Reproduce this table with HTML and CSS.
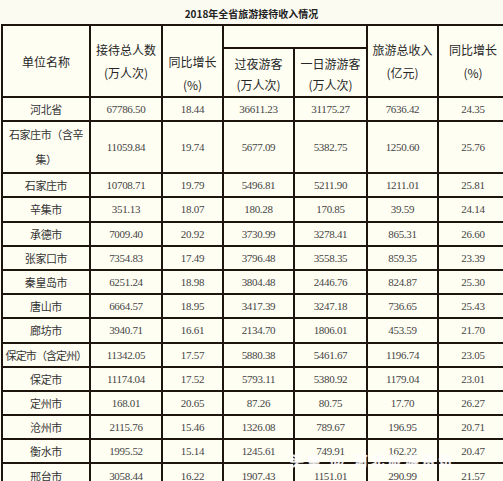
FILE: index.html
```html
<!DOCTYPE html>
<html lang="zh">
<head>
<meta charset="utf-8">
<link rel="stylesheet" href="styles.css">
</head>
<body>
<div class="page">
  <div class="title">2018年全省旅游接待收入情况</div>
  <table class="data">
    <colgroup>
      <col class="c1"><col class="c2"><col class="c3"><col class="c4"><col class="c5"><col class="c6"><col class="c7">
    </colgroup>
    <thead>
      <tr class="h-top">
        <th rowspan="2">单位名称</th>
        <th rowspan="2">接待总人数<br>(万人次)</th>
        <th rowspan="2"><br>同比增长<br>(%)</th>
        <th colspan="2" class="blank"></th>
        <th rowspan="2">旅游总收入<br>(亿元)</th>
        <th rowspan="2">同比增长<br>(%)</th>
      </tr>
      <tr class="h-sub">
        <th>过夜游客<br>(万人次)</th>
        <th>一日游游客<br>(万人次)</th>
      </tr>
    </thead>
    <tbody>
      <tr><td class="name">河北省</td><td>67786.50</td><td>18.44</td><td>36611.23</td><td>31175.27</td><td>7636.42</td><td>24.35</td></tr>
      <tr class="tall"><td class="name">石家庄市（含辛<br>集）</td><td>11059.84</td><td>19.74</td><td>5677.09</td><td>5382.75</td><td>1250.60</td><td>25.76</td></tr>
      <tr><td class="name">石家庄市</td><td>10708.71</td><td>19.79</td><td>5496.81</td><td>5211.90</td><td>1211.01</td><td>25.81</td></tr>
      <tr><td class="name">辛集市</td><td>351.13</td><td>18.07</td><td>180.28</td><td>170.85</td><td>39.59</td><td>24.14</td></tr>
      <tr><td class="name">承德市</td><td>7009.40</td><td>20.92</td><td>3730.99</td><td>3278.41</td><td>865.31</td><td>26.60</td></tr>
      <tr><td class="name">张家口市</td><td>7354.83</td><td>17.49</td><td>3796.48</td><td>3558.35</td><td>859.35</td><td>23.39</td></tr>
      <tr><td class="name">秦皇岛市</td><td>6251.24</td><td>18.98</td><td>3804.48</td><td>2446.76</td><td>824.87</td><td>25.30</td></tr>
      <tr><td class="name">唐山市</td><td>6664.57</td><td>18.95</td><td>3417.39</td><td>3247.18</td><td>736.65</td><td>25.43</td></tr>
      <tr><td class="name">廊坊市</td><td>3940.71</td><td>16.61</td><td>2134.70</td><td>1806.01</td><td>453.59</td><td>21.70</td></tr>
      <tr><td class="name wide">保定市（含定州）</td><td>11342.05</td><td>17.57</td><td>5880.38</td><td>5461.67</td><td>1196.74</td><td>23.05</td></tr>
      <tr><td class="name">保定市</td><td>11174.04</td><td>17.52</td><td>5793.11</td><td>5380.92</td><td>1179.04</td><td>23.01</td></tr>
      <tr><td class="name">定州市</td><td>168.01</td><td>20.65</td><td>87.26</td><td>80.75</td><td>17.70</td><td>26.27</td></tr>
      <tr><td class="name">沧州市</td><td>2115.76</td><td>15.46</td><td>1326.08</td><td>789.67</td><td>196.95</td><td>20.71</td></tr>
      <tr><td class="name">衡水市</td><td>1995.52</td><td>15.14</td><td>1245.61</td><td>749.91</td><td>162.22</td><td>20.47</td></tr>
      <tr><td class="name">邢台市</td><td>3058.44</td><td>16.22</td><td>1907.43</td><td>1151.01</td><td>290.99</td><td>21.57</td></tr>
    </tbody>
  </table>
  <div class="watermark">头条 @ 河北旅游资讯</div>
</div>
</body>
</html>
```
FILE: styles.css
```css
html, body {
  margin: 0;
  padding: 0;
  background: #fcfbf2;
  overflow: hidden;
  width: 503px;
  height: 481px;
}
.page {
  position: relative;
  width: 503px;
  height: 481px;
  overflow: hidden;
  font-family: "Noto Sans CJK SC", "Liberation Sans", sans-serif;
}
.title {
  height: 24px;
  line-height: 27px;
  text-align: center;
  font-size: 10px;
  font-weight: bold;
  color: #222;
}
.data {
  border-collapse: collapse;
  table-layout: fixed;
  width: 506px;
  margin-left: 1px;
  background: #fffef3;
}
.c1 { width: 88px; }
.c2 { width: 72px; }
.c3 { width: 61px; }
.c4 { width: 71px; }
.c5 { width: 73px; }
.c6 { width: 71px; }
.c7 { width: 70px; }
.data th, .data td {
  border: 2px solid #1e160e;
  padding: 0;
  text-align: center;
  vertical-align: middle;
}
.data th {
  font-weight: normal;
  font-size: 12px;
  line-height: 23px;
  color: #262626;
}
.h-top { height: 23px; }
.h-sub { height: 49px; }
.h-sub th { line-height: 21px; padding-top: 2px; }
.data td {
  height: 22.2px;
  line-height: 16px;
  font-family: "Liberation Serif", serif;
  font-size: 11px;
  letter-spacing: -0.3px;
  color: #444;
}
.data td.name {
  font-family: "Noto Sans CJK SC", "Liberation Sans", sans-serif;
  font-size: 11px;
  letter-spacing: -0.4px;
  color: #333;
}
.data td.wide {
  white-space: nowrap;
  letter-spacing: -0.9px;
}
.data tr.tall td { height: 46px; }
.data tr.tall td.name { line-height: 25px; }
.watermark {
  position: absolute;
  left: 290px;
  top: 450px;
  font-size: 14px;
  font-weight: bold;
  color: #ffffff;
  letter-spacing: 3px;
  text-shadow: 0 0 1px rgba(255,255,255,0.9);
  opacity: 0.9;
}
```
